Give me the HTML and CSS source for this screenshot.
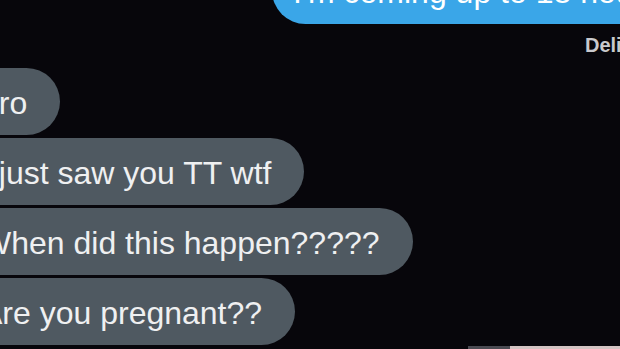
FILE: index.html
```html
<!DOCTYPE html>
<html lang="en">
<head>
<meta charset="utf-8">
<title>Messages</title>
<link rel="stylesheet" href="styles.css">
</head>
<body>
<div class="screen">
  <div class="bubble sent">I'm coming up to 18 hours</div>
  <div class="status">Delivered</div>
  <div class="thread">
    <div class="bubble recv">bro</div>
    <div class="bubble recv">I just saw you TT wtf</div>
    <div class="bubble recv">When did this happen?????</div>
    <div class="bubble recv">Are you pregnant??</div>
  </div>
  <div class="dock"></div>
</div>
</body>
</html>
```
FILE: styles.css
```css
html, body {
  margin: 0;
  padding: 0;
  background: #07060b;
  height: 349px;
  overflow: hidden;
}

.screen {
  width: 735px;
  margin-left: -50px;
  display: flex;
  flex-direction: column;
  align-items: flex-start;
  font-family: "Liberation Sans", Arial, sans-serif;
}

.bubble {
  box-sizing: border-box;
  height: 67px;
  padding: 15px 33px 12px 17px;
  font-size: 32px;
  line-height: 40px;
  border-radius: 34px;
  white-space: nowrap;
  color: #eff0f1;
  flex: none;
}

.sent {
  background: #3aa6e8;
  color: #ffffff;
  margin-top: -43px;
  margin-left: 322px;
  padding-left: 21px;
}

.status {
  align-self: flex-end;
  margin: 9px 10px 0 0;
  font-weight: bold;
  font-size: 20px;
  line-height: 24px;
  color: #c9c9cd;
}

.thread {
  display: flex;
  flex-direction: column;
  align-items: flex-start;
  gap: 3px;
  margin-top: 11px;
}

.recv {
  background: #4f5961;
  margin-left: 14px;
}

.dock {
  margin: 1px 0 0 518px;
  width: 160px;
  height: 3px;
  background: linear-gradient(90deg, #4a4a52 0, #4a4a52 42px, #d2c3c3 42px);
}
```
